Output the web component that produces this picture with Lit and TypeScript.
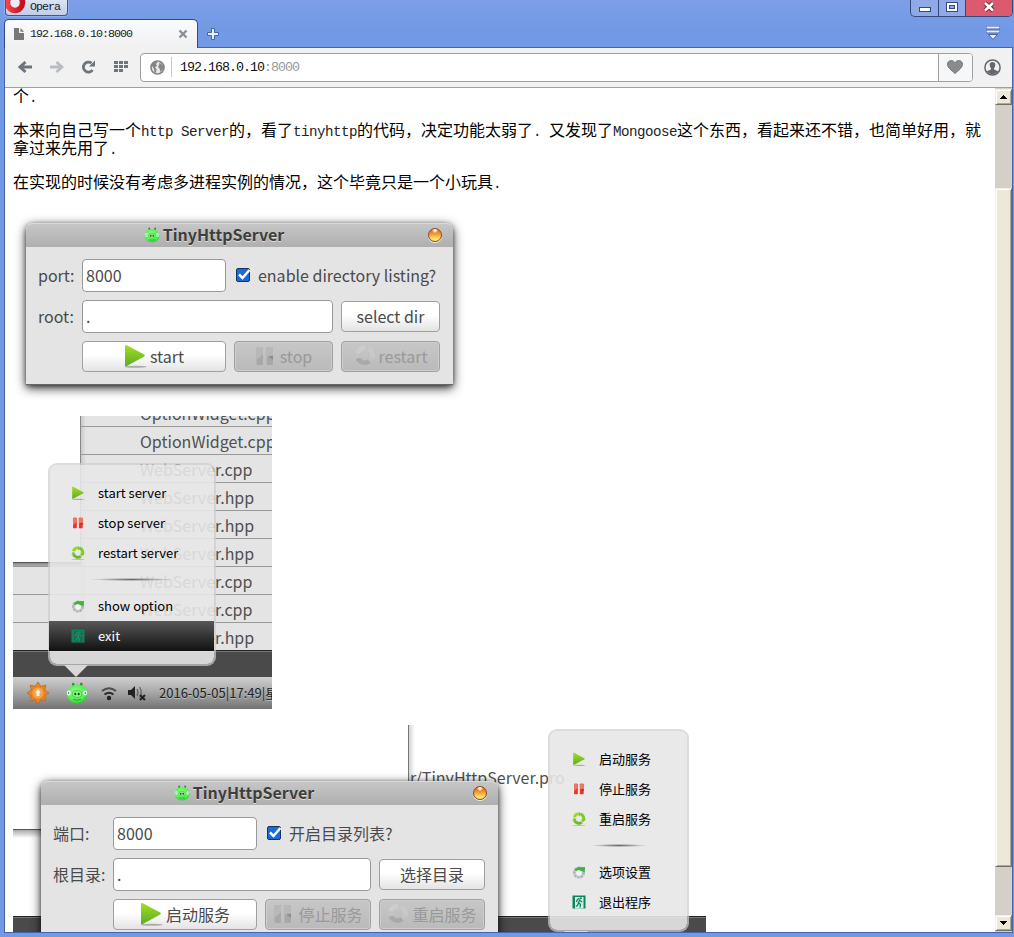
import { LitElement, html, svg, css } from "lit";
import { customElement, property } from "lit/decorators.js";

const UI_FONT = css`"Noto Sans CJK SC", "Noto Sans", sans-serif`;

const playIcon = (size: number) => html`<svg width=${size} height=${size} viewBox="0 0 24 24">
  <defs><linearGradient id="pg" x1="0" y1="0" x2="0" y2="1"><stop offset="0" stop-color="#a3df20"/><stop offset="1" stop-color="#5cab26"/></linearGradient></defs>
  <ellipse cx="12.5" cy="22.8" rx="11" ry="1" fill="#777" opacity=".55"/>
  <path d="M2 2.2Q2 .4 3.8 1.2L21.2 10.6Q22.6 11.6 21.2 12.6L3.8 22Q2 22.8 2 21Z" fill="url(#pg)"/></svg>`;

const pauseIcon = (size: number, disabled = false) => html`<svg width=${size} height=${size} viewBox="0 0 24 24">
  <g fill=${disabled ? "#a8a8a8" : "#e2382a"}><rect x="3.500" y="3" width="6.500" height="18" rx="1"/><rect x="13.500" y="3" width="6.500" height="18" rx="1"/></g>
  <path d="M3.500 16L10 10V4.500Q10 3 8.500 3H5Q3.500 3 3.500 4.500ZM13.500 13L20 11V4.500Q20 3 18.500 3H15Q13.500 3 13.500 4.500Z" fill=${disabled ? "#b8b8b8" : "#f07565"}/>
  <path d="M15 12H20V16Z" fill=${disabled ? "#8e8e8e" : "#c81e18"}/></svg>`;

const recycleIcon = (size: number, disabled = false) => html`<svg width=${size} height=${size} viewBox="0 0 24 24">
  ${disabled ? "" : svg`<ellipse cx="12" cy="23" rx="11" ry=".9" fill="#888" opacity=".5"/>`}
  <g fill="none" stroke-width="5">
    <path d="M4 9A8.300 8.300 0 0 1 12.500 3.200" stroke=${disabled ? "#cdcdcd" : "#98d928"}/>
    <path d="M15 3.700A8.300 8.300 0 0 1 19.700 14.500" stroke=${disabled ? "#c9c9c9" : "#7ccb1f"}/>
    <path d="M16.700 17.700A8.300 8.300 0 0 1 4.100 14" stroke=${disabled ? "#a9a9a9" : "#6dbb22"}/>
  </g>
  <g fill=${disabled ? "#c4c4c4" : "#7ccb1f"}><path d="M12 0L16.500 3.500L12 7.500Z"/><path d="M23 14L17 18.500L16.300 12Z"/><path d="M.5 15L3.500 9.500L8 13.500Z"/></g></svg>`;

const optionIcon = html`<svg width="14" height="14" viewBox="0 0 14 14">
  <circle cx="7" cy="7.500" r="4.600" fill="none" stroke="#b4b5c4" stroke-width="3" stroke-dasharray="2.600 .6"/>
  <path d="M2.500 5.500Q5 .8 9 2.200L13 2L12.800 7L9 6Q6.500 4 4.300 6.200Z" fill="#3fb438"/>
  <circle cx="7" cy="8.300" r="2.600" fill="#f1f3f1"/></svg>`;

const exitIcon = (dim: boolean) => html`<svg width="14" height="14" viewBox="0 0 14 14">
  <rect x=".5" y=".5" width="13" height="13" fill="#07875b"/>
  <rect x="3" y="2" width="8.500" height="11.500" fill=${dim ? "#24664d" : "#dcebe4"}/>
  <path d="M7.500 3.200L5.500 4.500L4.300 7M8 4.500L6.500 7.500L8.500 9.500L8 12.500M6.500 8L5.500 10.500L3.800 11.500M8 5.500L10.300 7" stroke=${dim ? "#0a9a69" : "#07875b"} fill="none" stroke-width="1.300"/>
  <circle cx="8.900" cy="3.300" r="1" fill=${dim ? "#0a9a69" : "#07875b"}/></svg>`;

const pigIcon = (w: number) => html`<svg width=${w} height=${w} viewBox="0 0 22 22">
  <defs><radialGradient id="pig" cx=".45" cy=".4" r=".75"><stop offset="0" stop-color="#96ff86"/><stop offset=".6" stop-color="#4df04f"/><stop offset="1" stop-color="#1fa02c"/></radialGradient></defs>
  <g fill="#2f8d2b"><ellipse cx="7.200" cy="2.500" rx="1.300" ry="1.700"/><ellipse cx="15.300" cy="2.300" rx="1.300" ry="1.700"/></g>
  <ellipse cx="11" cy="12" rx="10.400" ry="9.400" fill="url(#pig)"/>
  <ellipse cx="2.900" cy="11" rx="2" ry="2.400" fill="#eafff0"/><ellipse cx="19.100" cy="11" rx="2" ry="2.400" fill="#eafff0"/>
  <ellipse cx="11" cy="12" rx="4.700" ry="3.400" fill="#8af57c" stroke="#38a93a" stroke-width=".6"/>
  <circle cx="2.700" cy="11" r=".7" fill="#234"/><circle cx="19.300" cy="11" r=".7" fill="#234"/>
  <ellipse cx="9.300" cy="12" rx="1" ry="1.300" fill="#0c4a15"/><ellipse cx="12.700" cy="12" rx="1" ry="1.300" fill="#0c4a15"/>
  <path d="M7 17.500Q11 19 15 17.300" fill="none" stroke="#1c8a29" stroke-width=".8"/></svg>`;

@customElement("server-dialog")
class ServerDialog extends LitElement {
  @property({ type: Array }) labels: string[] = [];
  @property({ type: Boolean, reflect: true }) wide = false;

  static styles = css`
    :host { display: block; width: 427px; font: 16px/24px ${UI_FONT}; color: #4a4a4a; --cols: 36px 144px 99px 99px; }
    :host([wide]) { width: 457px; --cols: 52px 144px 106px 106px; }
    .window { background: #e4e4e4; border-radius: 7px 7px 0 0; height: 162px; box-sizing: border-box; border-bottom: 1px solid #666;
      box-shadow: 0 3px 11px rgba(0,0,0,.8), 0 1px 4px rgba(0,0,0,.4); }
    .title { height: 24px; box-sizing: border-box; border-radius: 7px 7px 0 0; border-top: 1px solid #dadada;
      background: linear-gradient(#c6c6c6, #afafaf); display: grid; grid-template-columns: 1fr auto 1fr; align-items: center; padding: 0 11px 2px 0; }
    .name { grid-column: 2; display: flex; align-items: center; gap: 3px; font-weight: 700; line-height: 22px; color: #3d3d3d; text-shadow: 0 1px 0 #ddd; padding-right: 40px; }
    .name span { margin-top: -2px; }
    .orb { justify-self: end; width: 12px; height: 12px; border-radius: 50%; border: 1px solid #8b4a2c;
      background: radial-gradient(circle at 50% 10%, #fff4d8 0 9%, transparent 25%), linear-gradient(#d8571c, #f2972e 40%, #ffe96b 85%); box-shadow: 0 1px 0 #eee; }
    .form { display: grid; grid-template-columns: var(--cols); column-gap: 8px; row-gap: 8px; padding: 12px 0 0 12px; align-items: center; }
    .field { box-sizing: border-box; height: 33px; border: 1px solid #999; border-radius: 4px; background: #fff; padding: 0 3px; line-height: 30px; }
    .root { grid-column: 2 / 4; }
    .check { grid-column: 3 / 5; display: flex; align-items: center; gap: 7px; padding-left: 1px; white-space: nowrap; }
    .label, .check span, .button span { white-space: nowrap; margin-top: -2px; }
    .button { box-sizing: border-box; height: 31px; border: 1px solid #a0a0a0; border-radius: 4px; background: linear-gradient(#fff 45%, #e3e3e3);
      display: flex; align-items: center; justify-content: center; gap: 3px; white-space: nowrap; }
    .start { grid-column: 2; padding-right: 1px; }
    .button svg { margin-top: -2px; }
    .off { background: linear-gradient(#c7c7c7, #bababa); color: #999; box-shadow: inset 0 0 0 1px #cdcdcd; }
    .off.stop { padding-right: 2px; }
    svg { display: block; flex: none; }
    .check svg { margin-top: -1px; }
  `;

  render() {
    const [port, listing, root, select, start, stop, restart] = this.labels;
    return html`<div class="window">
      <div class="title"><div class="name">${pigIcon(16)}<span>TinyHttpServer</span></div><div class="orb"></div></div>
      <div class="form">
        <span class="label">${port}</span><div class="field">8000</div>
        <div class="check"><svg width="16" height="16" viewBox="0 0 16 16"><rect x="1.500" y="1.500" width="13" height="13" rx="1.500" fill="#1c69d8" stroke="#17345f"/><path d="M4 7.500L7.500 11L14.500 3" fill="none" stroke="#fff" stroke-width="2.500"/></svg><span>${listing}</span></div>
        <span class="label">${root}</span><div class="field root">.</div><div class="button"><span>${select}</span></div>
        <div class="button start">${playIcon(24)}<span>${start}</span></div>
        <div class="button off stop">${pauseIcon(24, true)}<span>${stop}</span></div>
        <div class="button off">${recycleIcon(22, true)}<span>${restart}</span></div>
      </div></div>`;
  }
}

@customElement("tray-menu")
class TrayMenu extends LitElement {
  @property({ type: Array }) labels: string[] = [];
  @property({ type: Boolean, reflect: true }) active = false;

  static styles = css`
    :host { display: block; font: 13px/30px ${UI_FONT}; color: #000; --indent: 23px; --rule: 56px; }
    :host([active]) { --indent: 22px; --rule: 84px; }
    .menu { box-sizing: border-box; height: 203px; border: 2px solid rgba(205,205,205,.7); border-radius: 9px; background: rgba(231,231,231,.9); background-clip: padding-box; padding-top: 13px; }
    .item { display: flex; align-items: center; height: 30px; gap: 13px; padding-left: var(--indent); margin: 0 0 0 -1px; white-space: nowrap; }
    .item svg { display: block; flex: none; width: 14px; height: 14px; }
    .rule { height: 23px; display: flex; align-items: center; justify-content: center; }
    .rule i { width: var(--rule); height: 3px; background: radial-gradient(ellipse closest-side, #666, transparent); }
    .active { background: linear-gradient(#585858, #111); color: #fff; }
    .tip { height: 12px; width: 24px; margin: -1px 0 0 16px; background: #d8d8d8; clip-path: polygon(0 0, 100% 0, 50% 100%); }
  `;

  render() {
    const icons = [playIcon(14), pauseIcon(14), recycleIcon(14), optionIcon, exitIcon(this.active)];
    return html`<div class="menu">${this.labels.map((label, i) => html`
      ${i === 3 ? html`<div class="rule"><i></i></div>` : ""}
      <div class="item ${i === 4 && this.active ? "active" : ""}">${icons[i]}<span>${label}</span></div>`)}
    </div><div class="tip"></div>`;
  }
}

@customElement("app-root")
class AppRoot extends LitElement {
  static styles = css`
    :host { display: block; width: 1014px; height: 937px; overflow: hidden; }
    * { box-sizing: border-box; }
    svg { display: block; flex: none; }
    .frame { height: 937px; display: flex; flex-direction: column; background: linear-gradient(#7d9fe8, #7299e5 30px); padding: 0 1px 4px 4px; }
    .mono { font-family: "Liberation Mono", monospace; }
    .caption { height: 19px; display: flex; justify-content: space-between; align-items: flex-start; padding-left: 1px; }
    .brand { width: 63px; height: 16px; border: 1px solid #3f5792; border-top: 0; border-radius: 0 0 4px 4px; background: linear-gradient(#dce3f4, #c2cde8); display: flex; box-shadow: 0 0 0 1px #93aeeb; }
    .brand span { font-size: 11.67px; letter-spacing: -1px; line-height: 15px; margin-left: 4px; color: #222; }
    .controls { display: flex; height: 17px; width: 103px; border: 1px solid #34487c; border-top: 0; border-radius: 0 0 5px 5px; overflow: hidden; background: #8faae6; }
    .ctl { display: flex; align-items: flex-start; justify-content: center; border-right: 1px solid #34487c; width: 28px; padding-top: 1px; }
    .ctl.max { width: 27px; }
    .ctl.close { flex: 1; border: 0; background: #dc5a6e; }
    .tabs { height: 29px; display: flex; align-items: flex-end; border-bottom: 1px solid #4664aa; }
    .tab { width: 194px; height: 29px; margin-bottom: -1px; background: linear-gradient(#fafbfe, #f0f0f1); border: 1px solid #2d4a8c; border-bottom: 0; border-radius: 5px 5px 0 0; display: flex; align-items: center; padding: 0 9px 0 9px; }
    .tab span { font-size: 11.67px; letter-spacing: -1px; margin-left: 6px; flex: 1; color: #222; }
    .plus { margin: 0 0 6px 8px; }
    .stack { margin: 0 12px 6px auto; }
    .body { flex: 1; min-height: 0; border: 1px solid #4664aa; border-top: 0; display: flex; flex-direction: column; }
    .bar { height: 40px; background: #f1f1f2; border-bottom: 1px solid #a0a0a0; display: flex; align-items: center; padding: 0 10px 1px 13px; }
    .nav { display: flex; align-items: center; gap: 16px; }
    .nav .grid { margin-left: 1px; }
    .address { height: 29px; width: 833px; margin-left: 12px; border: 1px solid #a0a0a0; border-radius: 4px; background: #fff; display: flex; align-items: center; }
    .globe { margin-left: 9px; }
    .sep { width: 1px; height: 20px; background: #c8c8c8; margin: 0 8px 0 6px; }
    .url { font-size: 13.333px; letter-spacing: -1px; flex: 1; color: #111; }
    .url em { color: #999; font-style: normal; }
    .heart { height: 27px; width: 34px; border-left: 1px solid #a0a0a0; background: #f6f7f9; border-radius: 0 3px 3px 0; display: flex; align-items: center; justify-content: center; padding-right: 2px; }
    .user { margin-left: 11px; }
    .view { flex: 1; min-height: 0; display: flex; background: #fff; }
    .page { flex: 1; height: 844px; overflow: hidden; padding-left: 8px; color: #000; font: 16px/18px "Noto Sans CJK SC", sans-serif; }
    p { margin: 0 0 16px; white-space: nowrap; height: 18px; }
    p.first { margin-top: -2px; }
    p.two { height: 36px; }
    p span { display: block; height: 18px; }
    p code { font: 14.17px/16px "Liberation Mono", monospace; letter-spacing: -.5px; white-space: pre; color: #222; }
    .scroll { width: 17px; background: #d4d0c8; display: flex; flex-direction: column; padding-top: 1px; }
    .sbtn, .thumb { background: #ece9d8; border: 1px solid #f1efe2; border-right-color: #716f64; border-bottom-color: #716f64; box-shadow: inset 1px 1px #fff, inset -1px -1px #aca899; }
    .sbtn { height: 16px; display: flex; align-items: center; justify-content: center; }
    .thumb { height: 679px; margin-top: 83px; margin-bottom: 48px; }
    .shot { position: relative; overflow: hidden; margin-bottom: 16px; font: 16px/28px "Noto Sans CJK SC", sans-serif; color: #505050; }
    .one { width: 453px; height: 194px; padding: 17px 0 0 13px; overflow: visible; }
    .two-shot { width: 259px; height: 293px; }
    .three { width: 693px; height: 230px; }
    .files { position: absolute; left: 67px; top: -17px; width: 192px; border-left: 1px solid #888; background: linear-gradient(90deg, #c9c9c9, #e4e4e4 5px); }
    .files div { height: 28px; border-bottom: 1px solid #999; padding-left: 59px; white-space: nowrap; line-height: 29px; }
    .lower { position: absolute; left: 0; top: 146px; width: 68px; height: 90px; border-top: 1px solid #555; background: linear-gradient(#8c8c8c, #b5b5b5 4px, #e4e4e4 4px); }
    .lower div { height: 28px; border-bottom: 1px solid #999; }
    .lower div:first-child { height: 4px; }
    .dark { position: absolute; left: 0; right: 0; background: #4a4a4a; border-top: 1px solid #222; box-shadow: inset 0 1px #777; }
    .d2 { top: 234px; height: 27px; }
    .d3 { top: 191px; height: 40px; }
    .tray { position: absolute; left: 0; right: 0; top: 261px; height: 32px; background: linear-gradient(#d0d0d0, #a5a5a5 50%, #737373); display: flex; align-items: center; padding-left: 14px; font-size: 13px; color: #222; white-space: nowrap; }
    .tray .sun { margin-right: 17px; }
    .tray .wifi { margin: 0 9px 0 10px; }
    .tray span { margin-left: 12px; text-shadow: 0 1px #bbb; }
    .m2 { position: absolute; left: 35px; top: 47px; width: 168px; }
    .m3 { position: absolute; left: 535px; top: 4px; width: 141px; }
    .edge { position: absolute; left: 395px; top: 0; width: 298px; height: 191px; border-left: 1px solid #777; background: linear-gradient(90deg, #d5d5d5, #fff 6px); line-height: 28px; padding: 38px 0 0 1px; }
    .ledge { position: absolute; left: 0; top: 104px; width: 40px; height: 9px; border-top: 1px solid #555; background: linear-gradient(#aaa, #fff); }
    .dlg3 { position: absolute; left: 28px; top: 56px; }
  `;

  render() {
    const files = ["OptionWidget.cpp", "OptionWidget.cpp", "WebServer.cpp", "WebServer.hpp", "WebServer.hpp", "WebServer.hpp", "WebServer.cpp", "WebServer.cpp", "WebServer.hpp"];
    return html`<div class="frame">
      <div class="caption">
        <div class="brand"><svg width="20" height="15" viewBox="0 0 20 15"><defs><linearGradient id="op" x1="0" x2="1"><stop offset="0" stop-color="#f0434a"/><stop offset="1" stop-color="#c2101c"/></linearGradient></defs><ellipse cx="9" cy="2.500" rx="7.500" ry="8" fill="#e8edf8" stroke="url(#op)" stroke-width="5.500"/></svg><span class="mono">Opera</span></div>
        <div class="controls">
          <div class="ctl"><svg width="14" height="14"><rect x="1.500" y="6.500" width="11" height="4" fill="#fff" stroke="#34487c"/></svg></div>
          <div class="ctl max"><svg width="14" height="14"><rect x="1.500" y="1.500" width="11" height="9" fill="#fff" stroke="#34487c"/><rect x="4.500" y="4.500" width="5" height="3" fill="#8faae6" stroke="#34487c"/></svg></div>
          <div class="ctl close"><svg width="14" height="14"><path d="M3 2L11 9.500M11 2L3 9.500" stroke="#71313f" stroke-width="4.500"/><path d="M3 2L11 9.500M11 2L3 9.500" stroke="#fff" stroke-width="2.500"/></svg></div>
        </div>
      </div>
      <div class="tabs">
        <div class="tab"><svg width="10" height="12"><path d="M0 0H5V5H10V12H0ZM6.500 0L10 3.700H6.500Z" fill="#777"/></svg><span class="mono">192.168.0.10:8000</span><svg width="10" height="10"><path d="M1.500 1.500L8.500 8.500M8.500 1.500L1.500 8.500" stroke="#8a8d92" stroke-width="2.400"/></svg></div>
        <svg class="plus" width="14" height="14"><path d="M5.500 1.500h3v4h4v3h-4v4h-3v-4h-4v-3h4z" fill="#e6edfb" stroke="#4664aa"/></svg>
        <svg class="stack" width="16" height="15"><path d="M1 1.500H15M1 5.500H15" stroke="#4060a8" stroke-width="3.500"/><path d="M1.500 1.500H14.500M1.500 5.500H14.500" stroke="#e6edfb" stroke-width="2"/><path d="M3.500 8.500H12.500L8 13.500Z" fill="#e6edfb" stroke="#4664aa"/></svg>
      </div>
      <div class="body">
        <div class="bar">
          <div class="nav">
            <svg width="15" height="14"><path d="M14 7H3M7.500 2L2 7L7.500 12" fill="none" stroke="#6c747c" stroke-width="3"/></svg>
            <svg width="15" height="14"><path d="M1 7H12M7.500 2L13 7L7.500 12" fill="none" stroke="#b9bcc0" stroke-width="2.800"/></svg>
            <svg width="17" height="14" viewBox="-1 0 17 14"><path d="M11.500 10A5 5 0 1 1 10.500 3.200" fill="none" stroke="#6c747c" stroke-width="2.800"/><path d="M14 .5V6.500H8Z" fill="#6c747c"/></svg>
            <svg class="grid" width="14" height="12" viewBox="0 0 14 12"><path d="M0 0h4v3H0zM5 0h4v3H5zM10 0h4v3h-4zM0 4h4v3H0zM5 4h4v3H5zM10 4h4v3h-4zM0 8h4v3H0zM5 8h4v3H5z" fill="#6c747c"/></svg>
          </div>
          <div class="address">
            <svg class="globe" width="15" height="15" viewBox="0 0 15 15"><circle cx="7.500" cy="7.500" r="6.500" fill="#e8e8e8" stroke="#858585" stroke-width="1.700"/><path d="M1.500 5L4 2.200L8 1.500L6 4L7 5.500L5 7.500L6.500 9L6 13L4.500 12L4 9ZM9.500 2.500L13 5.500L13.500 8.500L10.500 12L9.500 8.500L8 7L9 5Z" fill="#858585"/></svg>
            <i class="sep"></i><div class="url mono">192.168.0.10<em>:8000</em></div>
            <div class="heart"><svg width="16" height="14" viewBox="0 0 16 14"><path d="M8 13.500C4 10 .5 7.500.5 4.300C.5.500 5.500-1 8 2.700C10.500-1 15.500.5 15.500 4.300C15.500 7.500 12 10 8 13.500Z" fill="#8b8b8b" stroke="#757575"/></svg></div>
          </div>
          <svg class="user" width="17" height="17" viewBox="0 0 17 17"><circle cx="8.500" cy="8.500" r="7.600" fill="#f1f1f2" stroke="#64686c" stroke-width="1.500"/><path d="M8.500 3C10.500 3 11.500 4.300 11.300 6.200C11.200 7.600 10.500 8.500 10 9.300V10.500L14.200 12.300A7 7 0 0 1 2.800 12.300L7 10.500V9.300C6.500 8.500 5.800 7.600 5.700 6.200C5.500 4.300 6.500 3 8.500 3Z" fill="#64686c"/></svg>
        </div>
        <div class="view">
          <div class="page">
            <p class="first">个<code>.</code></p>
            <p class="two"><span>本来向自己写一个<code>http Server</code>的，看了<code>tinyhttp</code>的代码，决定功能太弱了<code>. </code>又发现了<code>Mongoose</code>这个东西，看起来还不错，也简单好用，就</span><span>拿过来先用了<code>.</code></span></p>
            <p>在实现的时候没有考虑多进程实例的情况，这个毕竟只是一个小玩具<code>.</code></p>
            <div class="shot one"><server-dialog .labels=${["port:", "enable directory listing?", "root:", "select dir", "start", "stop", "restart"]}></server-dialog></div>
            <div class="shot two-shot">
              <div class="files">${files.map((f) => html`<div>${f}</div>`)}</div>
              <div class="lower"><div></div><div></div><div></div><div></div></div>
              <div class="dark d2"></div>
              <div class="tray">
                <svg class="sun" width="22" height="22" viewBox="0 0 22 22"><path d="M11 0L13.800 4.300L18.800 3.200L17.700 8.200L22 11L17.700 13.800L18.800 18.800L13.800 17.700L11 22L8.200 17.700L3.200 18.800L4.300 13.800L0 11L4.300 8.200L3.200 3.200L8.200 4.300Z" fill="#e98420" stroke="#b8661c" stroke-width=".7"/><circle cx="11" cy="11" r="5.500" fill="#f4a24d"/><path d="M11 7L14 10.500H12.500V14H9.500V10.500H8Z" fill="#fff0dc"/></svg>
                ${pigIcon(22)}
                <svg class="wifi" width="20" height="18" viewBox="0 0 20 18"><g fill="none" stroke="#2c2c2c" stroke-width="2"><path d="M4 7Q11 1.500 18 7" opacity=".75"/><path d="M6.500 10.500Q11 7 15.500 10.500"/></g><circle cx="11" cy="14" r="2.200" fill="#222"/></svg>
                <svg width="20" height="18" viewBox="0 0 20 18"><path d="M1 6H4L8 2V15L4 11H1Z" fill="#222"/><path d="M10 5Q12 8.500 10 12M12.500 3Q16 8.500 12.500 14" fill="none" stroke="#666" stroke-width="1.300"/><path d="M13 11L18 16M18 11L13 16" stroke="#222" stroke-width="2"/></svg>
                <span>2016-05-05|17:49|星期四</span>
              </div>
              <tray-menu class="m2" active .labels=${["start server", "stop server", "restart server", "show option", "exit"]}></tray-menu>
            </div>
            <div class="shot three">
              <div class="edge">r/TinyHttpServer.pro</div>
              <div class="ledge"></div>
              <div class="dark d3"></div>
              <server-dialog class="dlg3" wide .labels=${["端口:", "开启目录列表?", "根目录:", "选择目录", "启动服务", "停止服务", "重启服务"]}></server-dialog>
              <tray-menu class="m3" .labels=${["启动服务", "停止服务", "重启服务", "选项设置", "退出程序"]}></tray-menu>
            </div>
          </div>
          <div class="scroll">
            <div class="sbtn"><svg width="7" height="4"><path d="M3 0h1v1h1v1h1v1h1v1H0V3h1V2h1V1h1z" fill="#000"/></svg></div>
            <div class="thumb"></div>
            <div class="sbtn"><svg width="7" height="4"><path d="M0 0h7v1H6v1H5v1H4v1H3V3H2V2H1V1H0z" fill="#000"/></svg></div>
          </div>
        </div>
      </div>
    </div>`;
  }
}
